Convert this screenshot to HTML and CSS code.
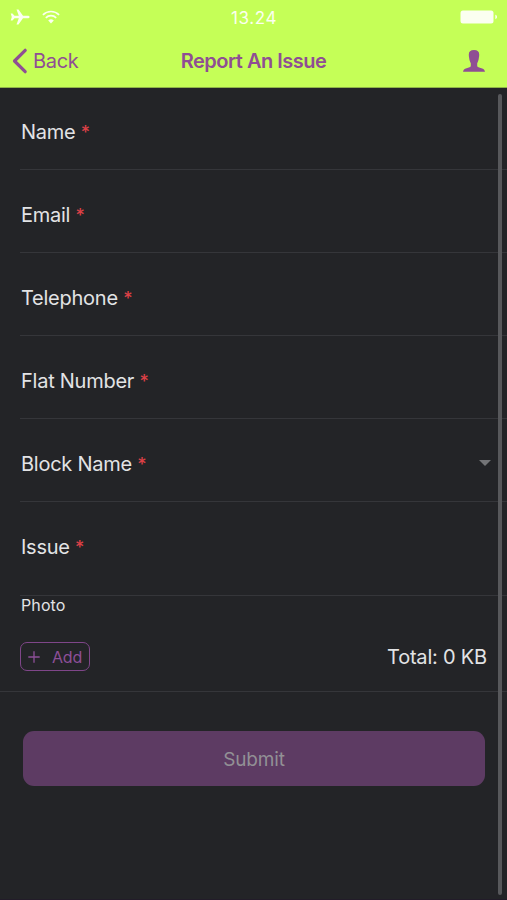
FILE: index.html
```html
<!DOCTYPE html>
<html lang="en">
<head>
<meta charset="utf-8">
<title>Report An Issue</title>
<link rel="stylesheet" href="styles.css">
</head>
<body>
<div class="screen">
  <header class="header">
    <div class="status">
      <div class="signals">
        <svg class="plane" width="20" height="16" viewBox="0 0 20 16"><path d="M19.6 8c0-.8-.9-1.300-2-1.300h-4.600L8.500.4H6.500l2.300 6.300H4.500L2.500 4.400H.7L1.800 8 .7 11.600h1.800l2-2.300h4.300L6.500 15.600h2l4.500-6.300h4.600c1.100 0 2-.5 2-1.300z" fill="currentColor"/></svg>
        <svg class="wifi" width="18" height="14" viewBox="0 0 18 14"><path d="M.9 4.800a11.600 11.600 0 0 1 16.200 0M3.800 7.800a7.500 7.500 0 0 1 10.400 0" fill="none" stroke="currentColor" stroke-width="1.700"/><path d="M9 13.500l-2.800-3a4 4 0 0 1 5.600 0z" fill="currentColor"/></svg>
      </div>
      <time class="clock">13.24</time>
      <svg class="battery" width="39" height="14" viewBox="0 0 39 14"><rect x="1.500" y=".5" width="33" height="13" rx="2.500" fill="currentColor"/><path d="M36.300 4.800c2.300.6 2.300 3.800 0 4.400z" fill="currentColor"/></svg>
    </div>
    <nav class="nav">
      <a class="back"><svg width="16" height="26" viewBox="0 0 16 26"><path d="M13.200 2.300L2.500 13l10.700 10.700" fill="none" stroke="currentColor" stroke-width="3.200" stroke-linecap="round" stroke-linejoin="round"/></svg><span>Back</span></a>
      <h1 class="title">Report An Issue</h1>
      <svg class="person" width="22" height="22" viewBox="0 0 22 22"><path d="M11 0c3.600 0 5.200 1.500 5.200 4.500 0 1.300-.1 2.200-.3 3.100-.3 3-1.100 4.700-1.700 5.700v2.900c.5 1.200 3 1.600 5 2.300 1.800.6 2.500 1.600 2.800 3.300H0c.3-1.700 1-2.700 2.800-3.300 2-.7 4.500-1.100 5-2.300v-2.900c-.6-1-1.400-2.700-1.700-5.700-.2-.9-.3-1.800-.3-3.100C5.800 1.500 7.400 0 11 0z" fill="currentColor"/></svg>
    </nav>
  </header>
  <main class="form">
    <div class="field"><label>Name <b>*</b></label></div>
    <div class="field"><label>Email <b>*</b></label></div>
    <div class="field"><label>Telephone <b>*</b></label></div>
    <div class="field"><label>Flat Number <b>*</b></label></div>
    <div class="field"><label>Block Name <b>*</b></label><i class="caret"></i></div>
    <div class="field issue"><label>Issue <b>*</b></label></div>
    <section class="photo">
      <div class="photo-label">Photo</div>
      <div class="photo-row">
        <button class="add"><svg width="12" height="12" viewBox="0 0 12 12"><path d="M6 .3v11.400M.3 6h11.400" stroke="currentColor" stroke-width="1.300"/></svg><span>Add</span></button>
        <span class="total">Total: 0 KB</span>
      </div>
    </section>
    <button class="submit">Submit</button>
  </main>
  <div class="scrollbar"></div>
</div>
</body>
</html>
```
FILE: styles.css
```css
* { box-sizing: border-box; }
body { margin: 0; background: #232427; font-family: Inter, "Liberation Sans", sans-serif; }
button { font-family: inherit; margin: 0; }
svg { display: block; flex: none; }
.screen { position: relative; width: 507px; height: 900px; overflow: hidden; background: #232427; border-bottom: 1px solid #221c29; }
.header { height: 88px; background: #c5ff57; border-bottom: 1px solid #8fb548; }
.status { height: 34px; display: grid; grid-template-columns: 1fr auto 1fr; align-items: center; padding: 0 9px 0 10px; color: #fbfff0; }
.signals { display: flex; align-items: center; gap: 12px; }
.clock { font-size: 17px; line-height: 20px; letter-spacing: 0.6px; padding-top: 2px; }
.battery { justify-self: end; }
.nav { height: 53px; display: grid; grid-template-columns: 1fr auto 1fr; align-items: center; padding: 0 22px 0 12px; color: #8f4e94; }
.back { display: flex; align-items: center; gap: 5px; font-size: 20px; line-height: 26px; letter-spacing: -0.3px; }
.title { margin: 0 -5px 0 5px; font-size: 20px; line-height: 26px; font-weight: 600; letter-spacing: -0.5px; }
.person { justify-self: end; }
.form { display: flex; flex-direction: column; color: #e2e3e5; }
.field { height: 83px; margin-left: 20px; padding: 8px 16px 0 1px; border-bottom: 1px solid #35363a; display: flex; align-items: center; justify-content: space-between; font-size: 20px; line-height: 26px; letter-spacing: -0.25px; }
.field:first-child { height: 82px; padding-top: 7px; }
.field b { color: #dc4046; font-size: 18px; line-height: 20px; font-weight: 500; }
.field.issue { height: 94px; align-items: flex-start; padding-top: 32px; }
.caret { width: 0; height: 0; margin-top: -2px; border: 6px solid transparent; border-top-color: #737477; border-bottom: 0; }
.photo { height: 96px; border-bottom: 1px solid #35363a; padding: 0 20px; }
.photo-label { margin-top: -1px; font-size: 16px; line-height: 20px; letter-spacing: 0.1px; padding-left: 1px; }
.photo-row { display: flex; align-items: center; justify-content: space-between; margin-top: 27px; }
.add { display: flex; align-items: center; gap: 12px; width: 70px; height: 29px; padding: 0 0 0 7px; border: 1px solid #7f4689; border-radius: 7px; background: none; color: #8d4f98; font-size: 16px; letter-spacing: -0.2px; }
.total { font-size: 20px; line-height: 26px; letter-spacing: -0.2px; }
.submit { width: 462px; height: 55px; margin: 39px 0 0 23px; border: 0; border-radius: 11px; background: #5d3b63; color: #929095; font-size: 19px; letter-spacing: -0.2px; padding-top: 3px; }
.scrollbar { position: absolute; top: 94px; right: 5px; width: 4px; height: 801px; border-radius: 2px; background: #57585b; }
```
